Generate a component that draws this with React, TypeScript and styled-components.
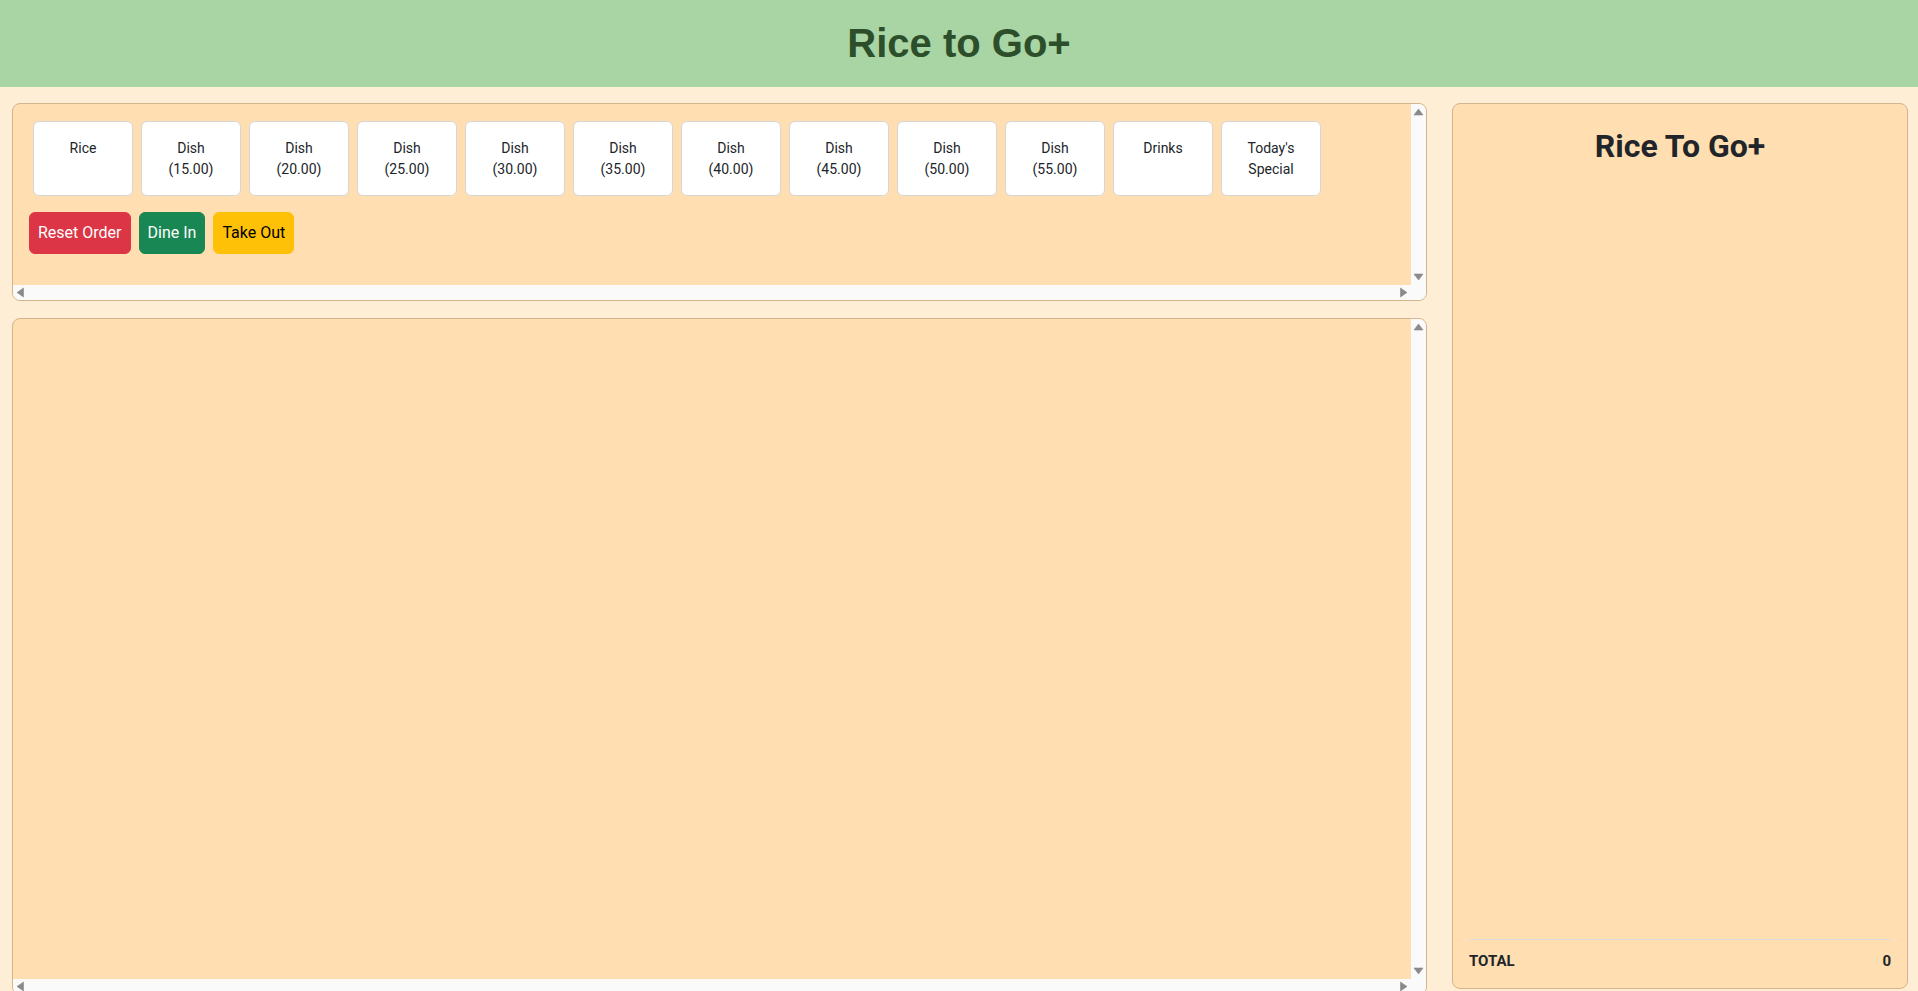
import React from 'react';
import styled, { createGlobalStyle } from 'styled-components';

const GlobalStyle = createGlobalStyle`
  html, body {
    margin: 0;
    padding: 0;
    overflow: hidden;
    background: #ffeed6;
    font-family: "Segoe UI", Roboto, "Noto Sans", sans-serif;
    color: #212529;
  }
  * {
    box-sizing: border-box;
  }
`;

const Header = styled.header`
  background: #a8d5a3;
  padding: 19px 0 20px;
  text-align: center;
`;

const Title = styled.h1`
  margin: 0;
  font-family: "Liberation Sans", Arial, sans-serif;
  font-weight: 700;
  font-size: 40px;
  line-height: 48px;
  color: #2d4e2a;
`;

const Main = styled.main`
  display: grid;
  grid-template-columns: minmax(0, 1fr) 456px;
  gap: 25px;
  padding: 16px 10px 0 12px;
`;

const LeftColumn = styled.div`
  display: flex;
  flex-direction: column;
  gap: 17px;
  min-width: 0;
`;

// panel with classic (always visible) scrollbars
const ScrollPanel = styled.section<{ $height: string }>`
  height: ${props => props.$height};
  display: grid;
  grid-template-columns: minmax(0, 1fr) 15px;
  grid-template-rows: minmax(0, 1fr) 15px;
  background: #ffdfb1;
  border: 1px solid #d4b48d;
  border-radius: 8px;
  overflow: hidden;
`;

const ScrollBody = styled.div<{ $padded?: boolean }>`
  padding: ${props => (props.$padded ? '16px 16px 0' : '0')};
  overflow: hidden;
`;

const VBar = styled.div`
  display: flex;
  flex-direction: column;
  justify-content: space-between;
  background: #fafafa;
`;

const HBar = styled.div`
  display: flex;
  justify-content: space-between;
  background: #fafafa;
`;

const Corner = styled.div`
  background: #fafafa;
`;

const ArrowBox = styled.span`
  display: block;
  width: 15px;
  height: 15px;
  svg {
    display: block;
  }
`;

const arrowPoints: Record<string, string> = {
  up: '3,11 12,11 7.5,5',
  down: '3,4 12,4 7.5,10',
  left: '4,7.5 10.5,3 10.5,12',
  right: '4.5,3 4.5,12 11,7.5',
};

const Arrow: React.FC<{ dir: 'up' | 'down' | 'left' | 'right' }> = ({ dir }) => (
  <ArrowBox>
    <svg width="15" height="15" viewBox="0 0 15 15">
      <polygon points={arrowPoints[dir]} fill="#8a8a8a" stroke="#8a8a8a" strokeWidth="0.6" strokeLinejoin="round" />
    </svg>
  </ArrowBox>
);

const CardRow = styled.div`
  display: flex;
  gap: 8px;
  padding: 1px 4px 0;
`;

const MenuCard = styled.button`
  flex: 0 0 auto;
  width: 100px;
  height: 75px;
  padding: 16px 6px 0;
  display: flex;
  flex-direction: column;
  align-items: center;
  background: #ffffff;
  border: 1px solid #d6d6d6;
  border-radius: 6px;
  font-family: inherit;
  font-size: 14px;
  line-height: 21px;
  color: #212529;
  cursor: pointer;
`;

const ActionRow = styled.div`
  display: flex;
  gap: 8px;
  margin-top: 16px;
`;

const ActionButton = styled.button<{ $bg: string; $fg: string }>`
  padding: 8px 8px;
  border: 1px solid ${props => props.$bg};
  border-radius: 6px;
  background: ${props => props.$bg};
  color: ${props => props.$fg};
  font-family: inherit;
  font-size: 16px;
  line-height: 24px;
  cursor: pointer;
`;

const OrderPanel = styled.aside`
  height: 886px;
  background: #ffdfb1;
  border: 1px solid #d4b48d;
  border-radius: 8px;
  padding: 16px;
  display: flex;
  flex-direction: column;
`;

const ReceiptTitle = styled.h2`
  margin: 7px 0 0;
  text-align: center;
  font-size: 32px;
  font-weight: 700;
  line-height: 38px;
  color: #212529;
`;

const ItemList = styled.div`
  flex: 1;
`;

const TotalRow = styled.div`
  border-top: 1px solid #dcdcdc;
  padding-top: 10px;
  display: flex;
  justify-content: space-between;
  font-size: 15px;
  font-weight: 700;
  line-height: 22px;
`;

const menuItems = [
  ['Rice'],
  ['Dish', '(15.00)'],
  ['Dish', '(20.00)'],
  ['Dish', '(25.00)'],
  ['Dish', '(30.00)'],
  ['Dish', '(35.00)'],
  ['Dish', '(40.00)'],
  ['Dish', '(45.00)'],
  ['Dish', '(50.00)'],
  ['Dish', '(55.00)'],
  ['Drinks'],
  ["Today's", 'Special'],
];

const actions = [
  { label: 'Reset Order', bg: '#dc3545', fg: '#ffffff' },
  { label: 'Dine In', bg: '#198754', fg: '#ffffff' },
  { label: 'Take Out', bg: '#ffc107', fg: '#000000' },
];

const Scrollbars: React.FC = () => (
  <>
    <VBar>
      <Arrow dir="up" />
      <Arrow dir="down" />
    </VBar>
    <HBar>
      <Arrow dir="left" />
      <Arrow dir="right" />
    </HBar>
    <Corner />
  </>
);

const App: React.FC = () => {
  return (
    <>
      <GlobalStyle />
      <Header>
        <Title>Rice to Go+</Title>
      </Header>
      <Main>
        <LeftColumn>
          <ScrollPanel $height="198px">
            <ScrollBody $padded>
              <CardRow>
                {menuItems.map((lines, i) => (
                  <MenuCard key={i}>
                    {lines.map(line => (
                      <span key={line}>{line}</span>
                    ))}
                  </MenuCard>
                ))}
              </CardRow>
              <ActionRow>
                {actions.map(a => (
                  <ActionButton key={a.label} $bg={a.bg} $fg={a.fg}>
                    {a.label}
                  </ActionButton>
                ))}
              </ActionRow>
            </ScrollBody>
            <Scrollbars />
          </ScrollPanel>
          <ScrollPanel $height="677px">
            <ScrollBody />
            <Scrollbars />
          </ScrollPanel>
        </LeftColumn>
        <OrderPanel>
          <ReceiptTitle>Rice To Go+</ReceiptTitle>
          <ItemList />
          <TotalRow>
            <span>TOTAL</span>
            <span>0</span>
          </TotalRow>
        </OrderPanel>
      </Main>
    </>
  );
};

export default App;
